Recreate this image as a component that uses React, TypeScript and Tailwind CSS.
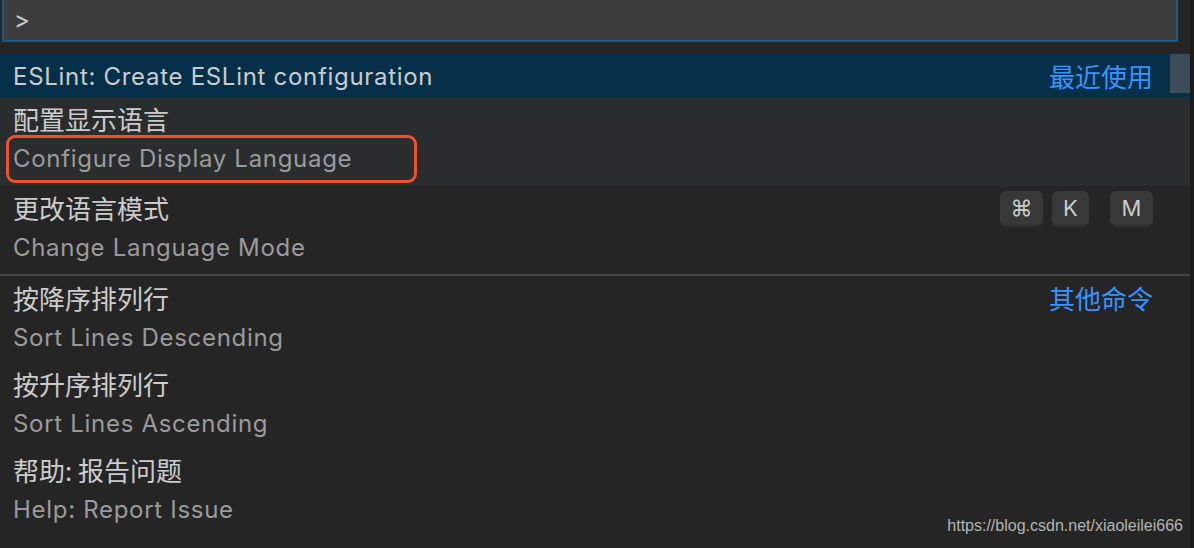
const zh = "font-['Noto_Sans_CJK_SC','Noto_Sans',sans-serif]";
const en = "font-['Inter','Noto_Sans_CJK_SC',sans-serif] tracking-[0.7px]";

type Item = {
  zh: string;
  en: string;
  keys?: string[][];
  label?: string;
  boxed?: boolean;
  h: string;
};

const items: Item[] = [
  { zh: "配置显示语言", en: "Configure Display Language", boxed: true, h: "h-[89px]" },
  { zh: "更改语言模式", en: "Change Language Mode", keys: [["⌘", "K"], ["M"]], h: "h-[88px]" },
];

const others: Item[] = [
  { zh: "按降序排列行", en: "Sort Lines Descending", label: "其他命令", h: "h-[86px]" },
  { zh: "按升序排列行", en: "Sort Lines Ascending", h: "h-[86px]" },
  { zh: "帮助: 报告问题", en: "Help: Report Issue", h: "h-[86px]" },
];

function Key({ k }: { k: string }) {
  return (
    <span
      className={`flex h-[36px] items-center justify-center rounded-[6px] border-b-2 border-[#2e2e2e] bg-[#383838] text-[22px] text-[#cccccc] font-['Inter',sans-serif] ${k === "K" ? "w-[37px]" : "w-[43px]"}`}
    >
      {k}
    </span>
  );
}

function Row({ item }: { item: Item }) {
  return (
    <div className={`relative ${item.h} pl-[13px] pr-[37px] pt-[4px] ${item.boxed ? "bg-[#2a2d2e]" : ""}`}>
      <div className="flex h-[38px] items-center justify-between">
        <span className={`-mt-[4px] text-[26px] text-[#cccccc] ${zh}`}>{item.zh}</span>
        {item.label && <span className={`-mt-[4px] text-[26px] text-[#3794ff] ${zh}`}>{item.label}</span>}
        {item.keys && (
          <div className="flex gap-[21px]">
            {item.keys.map((chord, i) => (
              <div key={i} className="flex gap-[9px]">
                {chord.map((k) => (
                  <Key key={k} k={k} />
                ))}
              </div>
            ))}
          </div>
        )}
      </div>
      <div className="relative flex h-[38px] items-center">
        <span className={`pt-[1px] text-[24px] text-[#9b9b9b] ${en}`}>{item.en}</span>
        {item.boxed && (
          <div className="absolute left-[-7px] top-[-4px] h-[48px] w-[411px] rounded-[9px] border-[3px] border-[#ee522b]" />
        )}
      </div>
    </div>
  );
}

export default function App() {
  return (
    <div className="flex h-[548px] w-[1194px] overflow-hidden bg-[#1b1b1b]">
      <div className="relative flex-1 bg-[#252526]">
        {/* quick input */}
        <div className="ml-[2px] mr-[12px] flex h-[42px] items-center border-x-2 border-b-2 border-[#185b8a] bg-[#3c3c3c] px-[10px]">
          <span className="text-[24px] text-[#cccccc] font-['Inter',sans-serif]">&gt;</span>
        </div>

        {/* selected row */}
        <div className="relative mt-[12px] flex h-[43px] items-center justify-between bg-[#062f4a] pl-[13px] pr-[37px]">
          <span className={`pt-[3px] text-[24px] text-[#cccccc] ${en}`}>ESLint: Create ESLint configuration</span>
          <span className={`text-[26px] text-[#3794ff] ${zh}`}>最近使用</span>
          <div className="absolute right-0 top-0 h-[39px] w-[20px] bg-[#3b4d59]" />
        </div>

        {items.map((it) => (
          <Row key={it.zh} item={it} />
        ))}

        <div className="h-[2px] bg-[#454545]" />

        {others.map((it) => (
          <Row key={it.zh} item={it} />
        ))}

        <span className="absolute bottom-[10px] right-[7px] font-['Liberation_Sans',sans-serif] text-[16px] text-[#b4b4b4]">
          https://blog.csdn.net/xiaoleilei666
        </span>
      </div>
      <div className="w-[4px]" />
    </div>
  );
}
